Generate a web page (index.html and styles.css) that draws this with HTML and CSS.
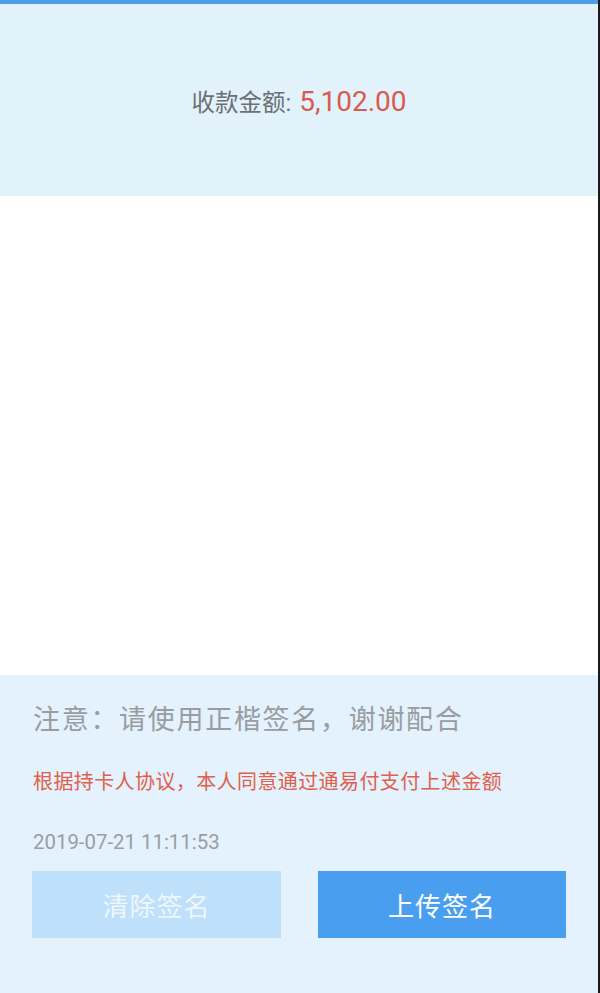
FILE: index.html
```html
<!DOCTYPE html>
<html lang="zh">
<head>
<meta charset="utf-8">
<link rel="stylesheet" href="styles.css">
</head>
<body>
<div class="page">
  <div class="topbar"></div>
  <header class="amount-box">
    <span class="label">收款金额:</span>
    <span class="amount">5,102.00</span>
  </header>
  <main class="canvas"></main>
  <footer class="bottom">
    <p class="notice">注意：请使用正楷签名，谢谢配合</p>
    <p class="agree">根据持卡人协议，本人同意通过通易付支付上述金额</p>
    <p class="time">2019-07-21 11:11:53</p>
    <div class="buttons">
      <button class="btn btn-clear">清除签名</button>
      <button class="btn btn-upload">上传签名</button>
    </div>
  </footer>
</div>
</body>
</html>
```
FILE: styles.css
```css
* { box-sizing: border-box; }
html, body { margin: 0; padding: 0; }
body {
  font-family: Roboto, "Noto Sans CJK SC", "Noto Sans", sans-serif;
  background: #e3f2fc;
}
.page {
  width: 600px;
  height: 993px;
  display: flex;
  flex-direction: column;
  border-right: 2px solid #1a1a1a;
}
.topbar {
  height: 4px;
  background: #4b9de6;
}
.amount-box {
  height: 192px;
  background: #e1f2fb;
  display: flex;
  justify-content: center;
  align-items: center;
  gap: 8px;
  padding-top: 2px;
}
.label {
  font-size: 23.5px;
  color: #6a6f73;
}
.amount {
  font-size: 28px;
  color: #d95a4e;
}
.canvas {
  height: 479px;
  background: #ffffff;
}
.bottom {
  flex: 1;
  background: #e3f2fc;
  padding: 25px 32px 0 33px;
}
.bottom p { margin: 0; }
.notice {
  font-size: 27px;
  letter-spacing: 1.7px;
  color: #999da1;
  line-height: 40px;
}
.agree {
  margin-top: 28px !important;
  font-size: 20px;
  letter-spacing: 0.4px;
  color: #e0604c;
  line-height: 28px;
}
.time {
  margin-top: 32px !important;
  font-size: 20.4px;
  color: #9a9ea2;
  line-height: 28px;
}
.buttons {
  margin-top: 15px;
  display: flex;
  justify-content: space-between;
  padding-right: 0;
}
.btn {
  width: 249px;
  height: 67px;
  border: none;
  font-family: inherit;
  font-size: 26px;
  letter-spacing: 1px;
  color: #ffffff;
  padding: 0;
}
.btn-clear {
  margin-left: -1px;
  background: #bfe0fa;
  color: #eef7fe;
}
.btn-upload {
  width: 248px;
  background: #4a9ef0;
}
```
